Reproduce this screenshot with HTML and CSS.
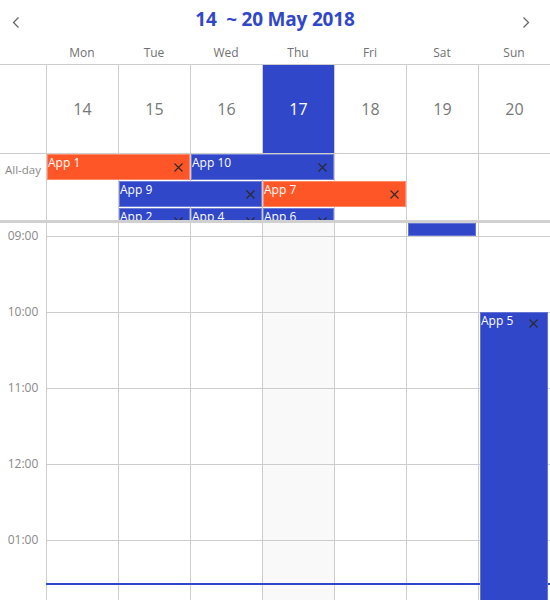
FILE: index.html
```html
<!DOCTYPE html>
<html>
<head>
<meta charset="utf-8">
<link rel="stylesheet" href="styles.css">
</head>
<body>
<div class="scheduler">
  <div class="toolbar">
    <span class="nav prev"><svg width="8" height="11" viewBox="0 0 8 11"><path d="M6.5 0.5 L1.5 5.5 L6.5 10.5" fill="none" stroke="#666" stroke-width="1.3"/></svg></span>
    <div class="title">14&nbsp; ~ 20 May 2018</div>
    <span class="nav next"><svg width="8" height="11" viewBox="0 0 8 11"><path d="M1.5 0.5 L6.5 5.5 L1.5 10.5" fill="none" stroke="#666" stroke-width="1.3"/></svg></span>
  </div>

  <div class="daynames">
    <div></div><div>Mon</div><div>Tue</div><div>Wed</div><div>Thu</div><div>Fri</div><div>Sat</div><div>Sun</div>
  </div>

  <div class="dates">
    <div class="corner"></div>
    <div class="date">14</div>
    <div class="date">15</div>
    <div class="date">16</div>
    <div class="date today">17</div>
    <div class="date">18</div>
    <div class="date">19</div>
    <div class="date">20</div>
  </div>

  <div class="allday">
    <div class="allday-label">All-day</div>
    <div class="ad-cell c2"></div>
    <div class="ad-cell c3"></div>
    <div class="ad-cell c4"></div>
    <div class="ad-cell c5"></div>
    <div class="ad-cell c6"></div>
    <div class="ad-cell c7"></div>
    <div class="ad-cell c8"></div>

    <div class="event orange r1 c2 s2"><span class="ev-title">App 1</span><svg class="x" viewBox="0 0 9 9"><path d="M0.5 0.5 L8.5 8.5 M8.5 0.5 L0.5 8.5"/></svg></div>
    <div class="event blue r1 c4 s2"><span class="ev-title">App 10</span><svg class="x" viewBox="0 0 9 9"><path d="M0.5 0.5 L8.5 8.5 M8.5 0.5 L0.5 8.5"/></svg></div>
    <div class="event blue r2 c3 s2"><span class="ev-title">App 9</span><svg class="x" viewBox="0 0 9 9"><path d="M0.5 0.5 L8.5 8.5 M8.5 0.5 L0.5 8.5"/></svg></div>
    <div class="event orange r2 c5 s2"><span class="ev-title">App 7</span><svg class="x" viewBox="0 0 9 9"><path d="M0.5 0.5 L8.5 8.5 M8.5 0.5 L0.5 8.5"/></svg></div>
    <div class="event blue r3 c3 s1"><span class="ev-title">App 2</span><svg class="x" viewBox="0 0 9 9"><path d="M0.5 0.5 L8.5 8.5 M8.5 0.5 L0.5 8.5"/></svg></div>
    <div class="event blue r3 c4 s1"><span class="ev-title">App 4</span><svg class="x" viewBox="0 0 9 9"><path d="M0.5 0.5 L8.5 8.5 M8.5 0.5 L0.5 8.5"/></svg></div>
    <div class="event blue r3 c5 s1"><span class="ev-title">App 6</span><svg class="x" viewBox="0 0 9 9"><path d="M0.5 0.5 L8.5 8.5 M8.5 0.5 L0.5 8.5"/></svg></div>
  </div>

  <div class="body">
    <div class="times">
      <div class="tpre"></div>
      <div class="tlabel">09:00</div>
      <div class="tlabel">10:00</div>
      <div class="tlabel">11:00</div>
      <div class="tlabel">12:00</div>
      <div class="tlabel">01:00</div>
    </div>
    <div class="day"><div class="pre"></div><div class="hour"></div><div class="hour"></div><div class="hour"></div><div class="hour"></div><div class="hour"></div></div>
    <div class="day"><div class="pre"></div><div class="hour"></div><div class="hour"></div><div class="hour"></div><div class="hour"></div><div class="hour"></div></div>
    <div class="day"><div class="pre"></div><div class="hour"></div><div class="hour"></div><div class="hour"></div><div class="hour"></div><div class="hour"></div></div>
    <div class="day today"><div class="pre"></div><div class="hour"></div><div class="hour"></div><div class="hour"></div><div class="hour"></div><div class="hour"></div></div>
    <div class="day"><div class="pre"></div><div class="hour"></div><div class="hour"></div><div class="hour"></div><div class="hour"></div><div class="hour"></div></div>
    <div class="day">
      <div class="pre"></div><div class="hour"></div><div class="hour"></div><div class="hour"></div><div class="hour"></div><div class="hour"></div>
      <div class="tevent sat-event"></div>
    </div>
    <div class="day">
      <div class="pre"></div><div class="hour"></div><div class="hour"></div><div class="hour"></div><div class="hour"></div><div class="hour"></div>
      <div class="tevent app5"><span class="ev-title">App 5</span><svg class="x" viewBox="0 0 9 9"><path d="M0.5 0.5 L8.5 8.5 M8.5 0.5 L0.5 8.5"/></svg></div>
    </div>
    <div class="now-line"></div>
  </div>
</div>
</body>
</html>
```

FILE: styles.css
```css
* { box-sizing: border-box; }
html, body { margin: 0; padding: 0; background: #fff; }
body {
  font-family: "Open Sans", "Noto Sans", "Liberation Sans", sans-serif;
  color: #666;
}
.scheduler {
  width: 550px;
  height: 600px;
  overflow: hidden;
}

/* toolbar */
.toolbar {
  height: 38px;
  display: grid;
  grid-template-columns: 1fr auto 1fr;
  align-items: center;
}
.nav { display: flex; width: 8px; height: 11px; margin-top: 7px; }
.nav.prev { justify-self: start; margin-left: 12px; }
.nav.next { justify-self: end; margin-right: 20px; }
.title {
  font-size: 19px;
  font-weight: 700;
  color: #3047c9;
  letter-spacing: -0.2px;
  white-space: nowrap;
  margin-bottom: 1px;
}

/* day names */
.daynames {
  display: grid;
  grid-template-columns: 46px repeat(7, 72px);
  height: 26px;
  align-items: center;
  text-align: center;
  font-size: 12px;
  color: #707070;
  padding-top: 3px;
}

/* dates */
.dates {
  display: grid;
  grid-template-columns: 46px repeat(7, 72px);
  height: 90px;
  border-top: 1px solid #cdcdcd;
  border-bottom: 1px solid #cdcdcd;
}
.date {
  border-left: 1px solid #cdcdcd;
  display: flex;
  align-items: center;
  justify-content: center;
  font-size: 16px;
  color: #777;
  padding-bottom: 1px;
}
.date.today {
  background: #3047c9;
  color: #fff;
}

/* all-day */
.allday {
  display: grid;
  grid-template-columns: 46px repeat(7, 72px);
  grid-template-rows: 27px 27px 27px;
  height: 69px;
  overflow: hidden;
  border-bottom: 3px solid #d0d0d0;
}
.allday-label {
  grid-column: 1;
  grid-row: 1 / -1;
  font-size: 11.5px;
  color: #888;
  text-align: center;
  padding-top: 8px;
  line-height: 16px;
}
.ad-cell { grid-row: 1 / -1; border-left: 1px solid #cdcdcd; }
.c2 { grid-column-start: 2; }
.c3 { grid-column-start: 3; }
.c4 { grid-column-start: 4; }
.c5 { grid-column-start: 5; }
.c6 { grid-column-start: 6; }
.c7 { grid-column-start: 7; }
.c8 { grid-column-start: 8; }
.s1 { grid-column-end: span 1; }
.s2 { grid-column-end: span 2; }
.r1 { grid-row: 1; }
.r2 { grid-row: 2; }
.r3 { grid-row: 3; }

.event {
  margin-left: 1px;
  height: 26px;
  display: flex;
  justify-content: space-between;
  align-items: center;
  padding: 0 7px 0 1px;
  color: #fff;
  font-size: 12px;
  box-shadow: inset 0 0 0 1px rgba(255,255,255,0.3);
  overflow: hidden;
}
.event .ev-title { align-self: flex-start; line-height: 18px; white-space: nowrap; }
.event.orange { background: #ff5627; }
.event.blue { background: #3047c9; }

.x {
  width: 9px;
  height: 9px;
  flex: none;
  fill: none;
  stroke: #2a2a2a;
  stroke-width: 1.1;
}

/* time body */
.body {
  position: relative;
  display: grid;
  grid-template-columns: 46px repeat(7, 72px);
  height: 377px;
  overflow: hidden;
}
.times { font-size: 12px; color: #888; text-align: center; }
.tpre { height: 5px; }
.tlabel { height: 76px; line-height: 16px; }
.day {
  position: relative;
  border-left: 1px solid #cdcdcd;
}
.day.today { background: #f9f9f9; }
.pre { height: 13px; }
.hour { height: 76px; border-top: 1px solid #cdcdcd; }

.tevent {
  position: absolute;
  left: 1px;
  width: 68px;
  background: #3047c9;
  box-shadow: inset 0 0 0 1px rgba(255,255,255,0.25);
  z-index: 2;
}
.sat-event { top: 0; height: 13px; }
.app5 {
  top: 89px;
  height: 400px;
  display: flex;
  justify-content: space-between;
  align-items: flex-start;
  padding: 0 10px 0 1px;
  color: #fff;
  font-size: 12px;
}
.app5 .ev-title { line-height: 18px; }
.app5 .x { margin-top: 7px; }

.now-line {
  position: absolute;
  left: 46px;
  right: 0;
  top: 360px;
  height: 2px;
  background: #3047c9;
  z-index: 1;
}
```
